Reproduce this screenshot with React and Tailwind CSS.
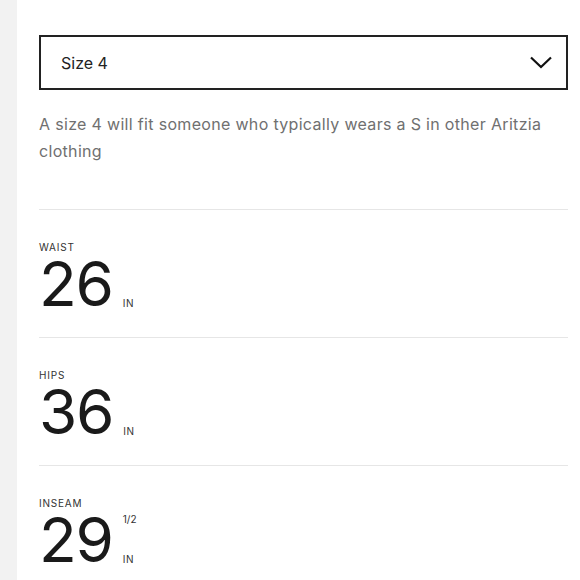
import React from 'react';

const measurements = [
  { label: 'WAIST', value: '26' },
  { label: 'HIPS', value: '36' },
  { label: 'INSEAM', value: '29', fraction: '1/2' },
];

const Measurement = ({ label, value, fraction }) => (
  <div className="border-t border-[#e6e6e6] pt-[30px] pb-[29px]">
    <div className="text-[10px] leading-[14px] tracking-[0.08em] text-[#333]">{label}</div>
    <div className="mt-[6px] flex items-stretch">
      <span className="text-[62px] leading-[48px] tracking-[-0.02em] text-[#1a1a1a]">{value}</span>
      <div className="ml-[10px] flex h-[48px] flex-col justify-between text-[10px] leading-[10px] text-[#333]">
        <span className="-mt-[2px]">{fraction}</span>
        <span className="tracking-[0.06em]">IN</span>
      </div>
    </div>
  </div>
);

export default function App() {
  return (
    <div className="flex w-[580px] h-[580px] overflow-hidden bg-white" style={{ fontFamily: 'Inter, "Noto Sans", sans-serif' }}>
      <div className="w-[17px] shrink-0 bg-[#f2f2f2]" />
      <div className="flex-1 pl-[22px] pr-[12px] pt-[35px]">
        <div className="flex h-[55px] items-center justify-between border-2 border-[#222] pl-[20px] pr-[14px]">
          <span className="text-[16px] text-[#222]">Size 4</span>
          <svg width="22" height="13" viewBox="0 0 22 13" fill="none" stroke="#111" strokeWidth="2.2">
            <path d="M1 1.5 L11 11 L21 1.5" />
          </svg>
        </div>
        <p className="mt-[21px] mb-[44px] text-[16px] leading-[27px] tracking-[0.02em] text-[#707070]">
          A size 4 will fit someone who typically wears a S in other Aritzia clothing
        </p>
        {measurements.map((m) => (
          <Measurement key={m.label} {...m} />
        ))}
      </div>
    </div>
  );
}
